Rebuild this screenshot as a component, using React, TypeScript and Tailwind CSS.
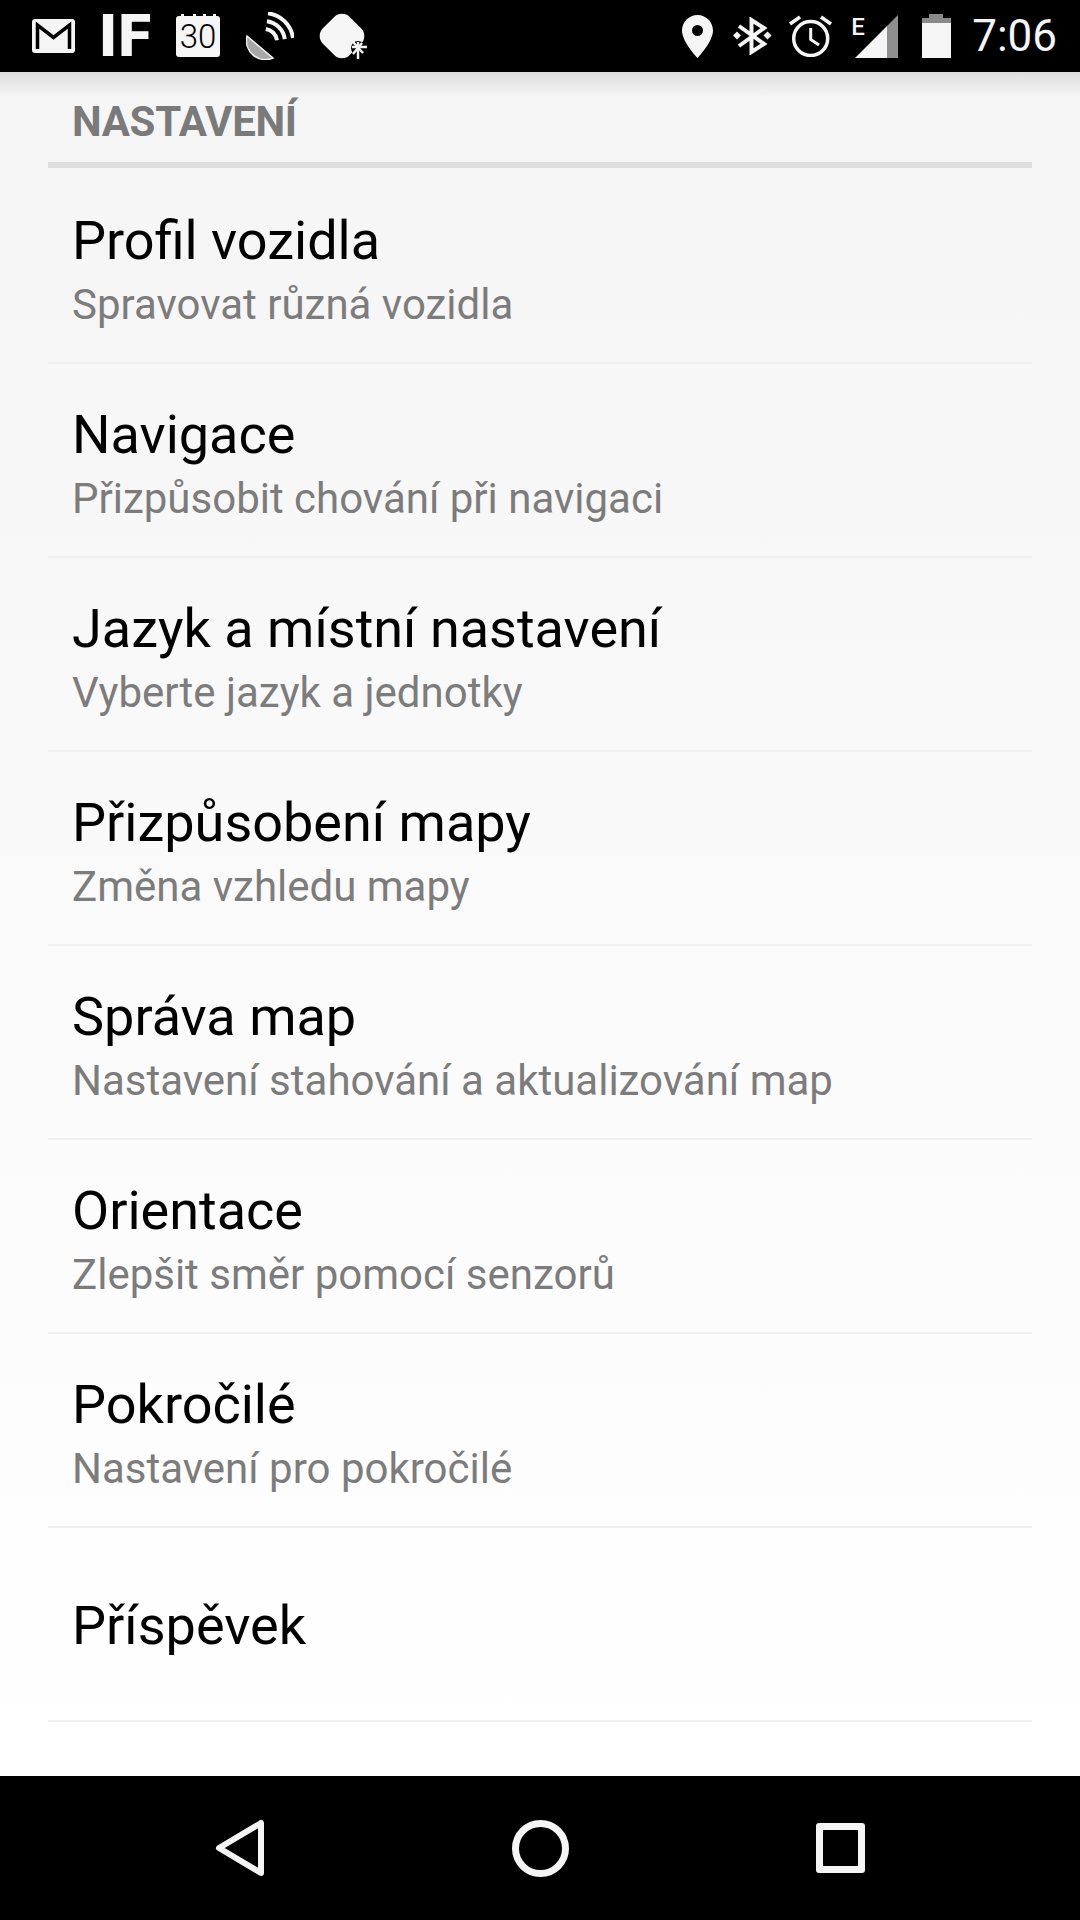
const rows = [
  { title: 'Profil vozidla', sub: 'Spravovat různá vozidla' },
  { title: 'Navigace', sub: 'Přizpůsobit chování při navigaci' },
  { title: 'Jazyk a místní nastavení', sub: 'Vyberte jazyk a jednotky' },
  { title: 'Přizpůsobení mapy', sub: 'Změna vzhledu mapy' },
  { title: 'Správa map', sub: 'Nastavení stahování a aktualizování map' },
  { title: 'Orientace', sub: 'Zlepšit směr pomocí senzorů' },
  { title: 'Pokročilé', sub: 'Nastavení pro pokročilé' },
  { title: 'Příspěvek' },
];

function GmailIcon() {
  return (
    <svg width="44" height="34" viewBox="0 0 44 34" className="block">
      <rect width="43" height="34" rx="3" fill="#f5f5f5" />
      <path d="M5.500 30V6L21.500 18.500L37.500 6V30" fill="none" stroke="#000" strokeWidth="3.500" />
    </svg>
  );
}

function IfLogo() {
  return (
    <span className="block -ml-[3px] w-[51px] text-[60px] leading-[70px] h-[70px] font-black text-[#f5f5f5] tracking-[1px] font-['Roboto',sans-serif]">
      IF
    </span>
  );
}

function CalendarIcon() {
  return (
    <svg width="44" height="44" viewBox="0 0 44 44" className="block">
      <path d="M3 2H5V0H8V2H17V0H20V2H27V0H30V2H37V0H40V2H41Q44 2 44 5V40Q44 43 41 43H3Q0 43 0 40V5Q0 2 3 2Z" fill="#f5f5f5" />
      <text x="22" y="34" textAnchor="middle" fontSize="33" fontFamily="Roboto, sans-serif" fontWeight="300" fill="#000">30</text>
    </svg>
  );
}

function SatelliteIcon() {
  return (
    <svg width="48" height="48" viewBox="0 0 48 48" className="block">
      <path d="M1 24L27 46A19 19 0 0 1 1 24Z" fill="#a8a8a8" stroke="#f5f5f5" strokeWidth="1.500" />
      <g fill="none" stroke="#f5f5f5" strokeWidth="4">
        <path d="M22 1.300A29 29 0 0 1 47 26" />
        <path d="M20.900 9.200A21 21 0 0 1 38.800 27.100" />
        <path d="M19.800 17.100A13 13 0 0 1 31 28.200" />
      </g>
    </svg>
  );
}

function BlobIcon() {
  return (
    <svg width="50" height="48" viewBox="0 0 50 48" className="block">
      <rect x="5" y="5" width="38" height="38" rx="11" transform="rotate(45 24 24)" fill="#f5f5f5" />
      <circle cx="40" cy="36" r="7" fill="#000" />
      <g stroke="#f5f5f5" strokeWidth="2.500">
        <path d="M34 35H49" />
        <path d="M40 30V47" />
        <path d="M35 30L45 41" />
        <path d="M35 42L44 31" />
      </g>
    </svg>
  );
}

function PinIcon() {
  return (
    <svg width="31" height="43" viewBox="0 0 31 43" className="block">
      <path
        fillRule="evenodd"
        d="M15.500 0C7 0 0 7 0 15.500C0 27 15.500 43 15.500 43S31 27 31 15.500C31 7 24 0 15.500 0ZM15.500 10A5.500 5.500 0 1 1 15.500 21A5.500 5.500 0 0 1 15.500 10Z"
        fill="#f5f5f5"
      />
    </svg>
  );
}

function BluetoothIcon() {
  return (
    <svg width="39" height="38" viewBox="0 0 39 38" className="block">
      <path d="M6 9L31 27L18.500 35V3L31 11L6 29" fill="none" stroke="#f5f5f5" strokeWidth="4" />
      <path d="M4 14.500L8 18.500L4 22.500L0 18.500Z" fill="#f5f5f5" />
      <path d="M34.500 14.500L38.500 18.500L34.500 22.500L30.500 18.500Z" fill="#f5f5f5" />
    </svg>
  );
}

function AlarmIcon() {
  return (
    <svg width="43" height="42" viewBox="0 0 43 42" className="block">
      <g fill="none" stroke="#f5f5f5">
        <circle cx="21.700" cy="23.500" r="17" strokeWidth="3.500" />
        <path d="M21.700 13V24.500L30 30" strokeWidth="3" />
        <path d="M1 9L11 2" strokeWidth="3.500" />
        <path d="M32 2L42 9" strokeWidth="3.500" />
      </g>
    </svg>
  );
}

function SignalIcon() {
  return (
    <div className="relative w-[47px] h-[43px]">
      <svg width="47" height="43" viewBox="0 0 47 43" className="block">
        <path d="M4 43L36 11V43Z" fill="#f5f5f5" />
        <path d="M36 11L47 0V43H36Z" fill="#8f8f8f" />
      </svg>
      {/* network type badge over the bars */}
      <span className="absolute left-0 -top-[2px] text-[24px] leading-[28px] font-medium text-[#f5f5f5]">E</span>
    </div>
  );
}

function BatteryIcon() {
  return (
    <svg width="29" height="44" viewBox="0 0 29 44" className="block">
      <path d="M7 0H21V4H29V9H0V4H7Z" fill="#8a8a8a" />
      <rect y="9" width="29" height="35" fill="#f5f5f5" />
    </svg>
  );
}

function StatusBar() {
  return (
    <div className="h-[72px] shrink-0 bg-black flex items-center justify-between pl-[32px] pr-[23px] overflow-hidden">
      <div className="flex items-center">
        <GmailIcon />
        <div className="ml-[26px]"><IfLogo /></div>
        <div className="ml-[26px]"><CalendarIcon /></div>
        <div className="ml-[26px]"><SatelliteIcon /></div>
        <div className="ml-[24px]"><BlobIcon /></div>
      </div>
      <div className="flex items-center">
        <PinIcon />
        <div className="ml-[20px]"><BluetoothIcon /></div>
        <div className="ml-[17px]"><AlarmIcon /></div>
        <div className="ml-[19px]"><SignalIcon /></div>
        <div className="ml-[24px]"><BatteryIcon /></div>
        <span className="ml-[21px] text-[44px] leading-[52px] text-[#f5f5f5] font-['Roboto',sans-serif]">7:06</span>
      </div>
    </div>
  );
}

function NavBar() {
  return (
    <div className="h-[144px] shrink-0 bg-black grid grid-cols-3 px-[90px] items-center">
      <div className="flex justify-center">
        <svg width="50" height="58" viewBox="0 0 50 58" className="block">
          <path d="M46 4V54L4 29Z" fill="none" stroke="#f5f5f5" strokeWidth="6" strokeLinejoin="round" />
        </svg>
      </div>
      <div className="flex justify-center">
        <div className="w-[57px] h-[57px] rounded-full border-[7px] border-[#f5f5f5]" />
      </div>
      <div className="flex justify-center">
        <div className="w-[49px] h-[50px] rounded-[3px] border-[7px] border-[#f5f5f5]" />
      </div>
    </div>
  );
}

export default function App() {
  return (
    <div className="w-[1080px] h-[1920px] flex flex-col overflow-hidden font-['Roboto',sans-serif]">
      <StatusBar />
      <div className="relative flex-1 bg-gradient-to-b from-[#f5f5f5] to-white">
        <div className="absolute inset-x-0 top-0 h-[24px] bg-gradient-to-b from-black/10 to-transparent" />
        <div className="h-[98px] mx-[48px] flex flex-col justify-end">
          <div className="px-[24px] text-[42px] leading-[50px] font-bold tracking-[-0.3px] text-[#7a7a7a] mb-[15px]">NASTAVENÍ</div>
          <div className="h-[6px] bg-[#dedede] mb-[2px]" />
        </div>
        <div className="mx-[48px]">
          {rows.map((row) => (
            <div
              key={row.title}
              className={row.sub
                ? 'h-[194px] border-b-2 border-[#f0f0f0] px-[24px] pt-[9px] flex flex-col justify-center'
                : 'h-[194px] border-b-2 border-[#f0f0f0] px-[24px] pt-[4px] flex flex-col justify-center'}
            >
              <div className="text-[54px] leading-[64px] text-black">{row.title}</div>
              {row.sub && <div className="mt-[5px] text-[42px] leading-[54px] text-[#7c7c7c]">{row.sub}</div>}
            </div>
          ))}
        </div>
      </div>
      <NavBar />
    </div>
  );
}
